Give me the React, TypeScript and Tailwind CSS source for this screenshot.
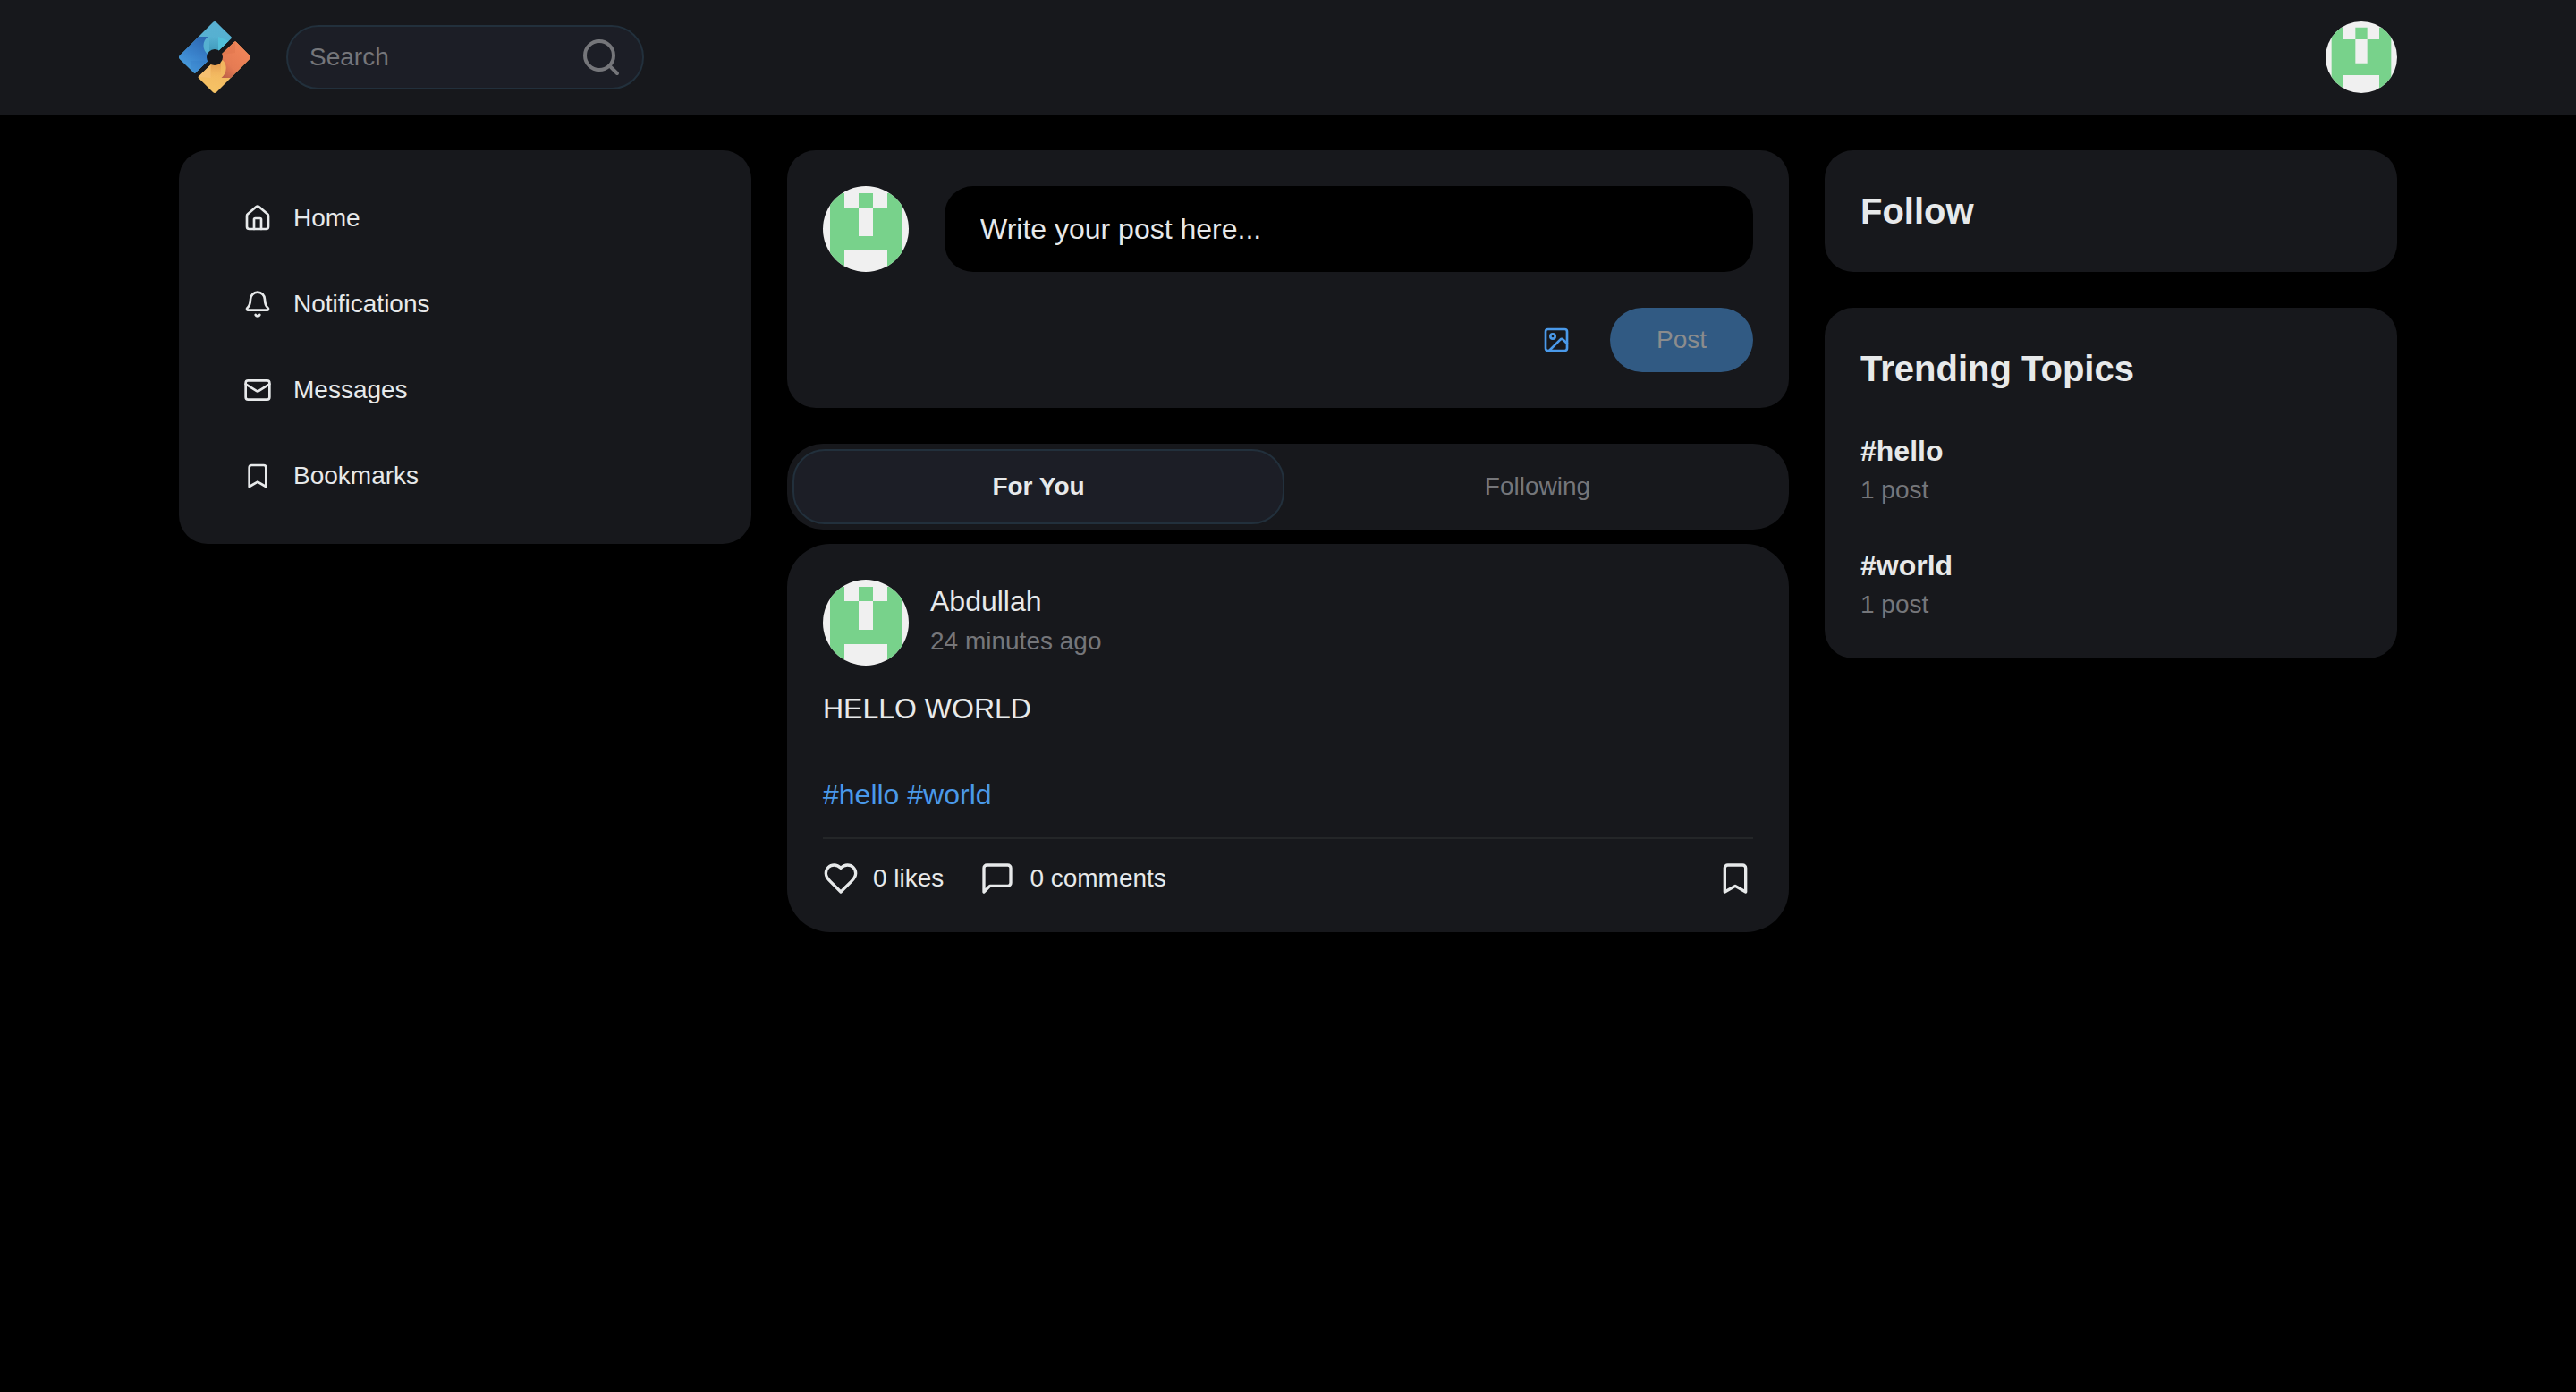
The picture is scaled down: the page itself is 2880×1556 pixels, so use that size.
import { useState } from "react";
import type { ReactNode } from "react";
import { Search } from "lucide-react";

const icons: Record<string, ReactNode> = {
  home: (
    <>
      <path d="M15 21v-8a1 1 0 0 0-1-1h-4a1 1 0 0 0-1 1v8" />
      <path d="M3 10a2 2 0 0 1 .709-1.528l7-5.999a2 2 0 0 1 2.582 0l7 5.999A2 2 0 0 1 21 10v9a2 2 0 0 1-2 2H5a2 2 0 0 1-2-2z" />
    </>
  ),
  bell: (
    <>
      <path d="M10.268 21a2 2 0 0 0 3.464 0" />
      <path d="M3.262 15.326A1 1 0 0 0 4 17h16a1 1 0 0 0 .74-1.673C19.41 13.956 18 12.499 18 8A6 6 0 0 0 6 8c0 4.499-1.411 5.956-2.738 7.326" />
    </>
  ),
  mail: (
    <>
      <rect width="20" height="16" x="2" y="4" rx="2" />
      <path d="m22 7-8.97 5.7a1.94 1.94 0 0 1-2.06 0L2 7" />
    </>
  ),
  bookmark: <path d="m19 21-7-4-7 4V5a2 2 0 0 1 2-2h10a2 2 0 0 1 2 2v16z" />,
  image: (
    <>
      <rect width="18" height="18" x="3" y="3" rx="2" ry="2" />
      <circle cx="9" cy="9" r="2" />
      <path d="m21 15-3.086-3.086a2 2 0 0 0-2.828 0L6 21" />
    </>
  ),
  heart: (
    <path d="M19 14c1.49-1.46 3-3.21 3-5.5A5.5 5.5 0 0 0 16.5 3c-1.76 0-3 .5-4.5 2-1.5-1.5-2.74-2-4.5-2A5.5 5.5 0 0 0 2 8.5c0 2.3 1.5 4.05 3 5.5l7 7Z" />
  ),
  comment: <path d="M21 15a2 2 0 0 1-2 2H7l-4 4V5a2 2 0 0 1 2-2h14a2 2 0 0 1 2 2z" />,
};

function Icon({ name, className }: { name: string; className: string }) {
  return (
    <svg
      viewBox="0 0 24 24"
      fill="none"
      stroke="currentColor"
      strokeWidth="2"
      strokeLinecap="round"
      strokeLinejoin="round"
      aria-hidden="true"
      className={className}
    >
      {icons[name]}
    </svg>
  );
}

function Logo() {
  return (
    <svg viewBox="0 0 80 80" className="size-20" role="img" aria-label="Logo">
      <defs>
        <linearGradient id="cyan" x1="0" y1="0" x2="0.3" y2="1">
          <stop offset="0" stopColor="#5bb0d2" />
          <stop offset="1" stopColor="#4db1cf" />
        </linearGradient>
        <linearGradient id="blue" x1="0.8" y1="0" x2="0.3" y2="1">
          <stop offset="0" stopColor="#2d68b2" />
          <stop offset="0.5" stopColor="#3a83cc" />
          <stop offset="1" stopColor="#4da3e2" />
        </linearGradient>
        <linearGradient id="orange" x1="0.7" y1="0.3" x2="0.15" y2="1">
          <stop offset="0" stopColor="#ee8358" />
          <stop offset="0.6" stopColor="#e57b53" />
          <stop offset="1" stopColor="#bf6249" />
        </linearGradient>
        <linearGradient id="amber" x1="0.6" y1="0" x2="0.4" y2="1">
          <stop offset="0" stopColor="#eba255" />
          <stop offset="1" stopColor="#f6c466" />
        </linearGradient>
        <linearGradient id="shadeDown" x1="0" y1="0" x2="0" y2="1">
          <stop offset="0" stopColor="#3d97b9" stopOpacity="0" />
          <stop offset="1" stopColor="#3d97b9" stopOpacity="0.9" />
        </linearGradient>
        <linearGradient id="shadeUp" x1="0" y1="0" x2="0" y2="1">
          <stop offset="0" stopColor="#dd9049" stopOpacity="0.8" />
          <stop offset="1" stopColor="#f0b15e" stopOpacity="0" />
        </linearGradient>
        <clipPath id="upper">
          <path d="M38 1Q40-1 42 1L58.4 17Q59.4 18 58.4 19.2L18.7 57.2Q17.7 58.2 16.7 57.2L1 42Q-1 40 1 38Z" />
        </clipPath>
        <clipPath id="lower">
          <path d="M62 22.8Q63 21.8 64 22.8L79 38Q81 40 79 42L42 79Q40 81 38 79L22 63.2Q21 62.2 22 61.2Z" />
        </clipPath>
        <mask id="hole">
          <rect width="80" height="80" fill="#fff" />
          <circle cx="40" cy="40" r="9" fill="#000" />
        </mask>
      </defs>
      <g mask="url(#hole)">
        <g clipPath="url(#upper)">
          <rect width="80" height="80" fill="url(#cyan)" />
          <path d="M34 17H44V34H34Z" fill="url(#shadeDown)" />
          <path d="M44 17L56 22L44 34Z" fill="#52bfd9" />
          <path d="M0 17H32.5C26.5 21 25 32 33 37V60H0Z" fill="url(#blue)" />
          <path d="M14 44H32V60H14Z" fill="#2f79c2" fillOpacity="0.25" />
        </g>
        <g clipPath="url(#lower)">
          <rect width="80" height="80" fill="url(#amber)" />
          <path d="M35.5 46H47V63H35.5Z" fill="url(#shadeUp)" />
          <path d="M22 62L35.5 48V63Z" fill="#f6c277" fillOpacity="0.7" />
          <path d="M47 42C55 46 54 58 47.5 63H80V20H47Z" fill="url(#orange)" />
          <path d="M47 37L63 35L63 22L47 34Z" fill="#d97048" fillOpacity="0.35" />
        </g>
      </g>
    </svg>
  );
}

function Avatar({ className }: { className: string }) {
  return (
    <svg viewBox="0 0 12 12" className={className} role="img" aria-label="Abdullah">
      <defs>
        <clipPath id="round">
          <circle cx="6" cy="6" r="6" />
        </clipPath>
      </defs>
      <g clipPath="url(#round)">
        <rect width="12" height="12" fill="#f0f0f0" />
        <path
          d="M1 1H3V3H5V1H7V3H9V1H11V12H9V9H3V12H1ZM5 3V7H7V3Z"
          fillRule="evenodd"
          fill="#78d28b"
        />
      </g>
    </svg>
  );
}

const links = [
  { label: "Home", icon: "home" },
  { label: "Notifications", icon: "bell" },
  { label: "Messages", icon: "mail" },
  { label: "Bookmarks", icon: "bookmark" },
];

const topics = [
  { tag: "#hello", count: "1 post" },
  { tag: "#world", count: "1 post" },
];

const tabs = ["For You", "Following"];

function Header() {
  return (
    <header className="bg-[#17181c]">
      <div className="mx-auto flex max-w-[2560px] items-center gap-10 px-10 py-6">
        <a href="#home">
          <Logo />
        </a>
        <form
          role="search"
          className="flex h-18 w-[400px] items-center rounded-full border-2 border-[#22303c] bg-[#1c1e26] pr-[22px] pl-6 text-[#75767a]"
        >
          <input
            type="search"
            aria-label="Search"
            placeholder="Search"
            className="min-w-0 flex-1 bg-transparent text-[28px] leading-[42px] text-[#e7e9ea] outline-none placeholder:text-[#75767a]"
          />
          <button type="submit" aria-label="Submit search">
            <Search className="size-12" />
          </button>
        </form>
        <button type="button" aria-label="Account" className="ml-auto">
          <Avatar className="size-20" />
        </button>
      </div>
    </header>
  );
}

function Sidebar() {
  return (
    <nav className="flex flex-col gap-6 rounded-4xl bg-[#17181c] p-10">
      {links.map((link) => (
        <a
          key={link.label}
          href={`#${link.label.toLowerCase()}`}
          className="flex h-18 items-center gap-6 px-8 text-[28px] leading-[42px]"
        >
          <Icon name={link.icon} className="size-8" />
          {link.label}
        </a>
      ))}
    </nav>
  );
}

function Composer() {
  return (
    <form className="flex flex-col gap-10 rounded-4xl bg-[#17181c] p-10">
      <div className="flex gap-10">
        <Avatar className="size-24" />
        <input
          type="text"
          aria-label="Write your post"
          placeholder="Write your post here..."
          className="h-24 min-w-0 flex-1 rounded-4xl bg-black px-10 text-[32px] leading-12 outline-none placeholder:text-[#e7e9ea]"
        />
      </div>
      <div className="flex justify-end gap-6">
        <button
          type="button"
          aria-label="Add image"
          className="flex size-18 items-center justify-center text-[#4a99e9]"
        >
          <Icon name="image" className="size-8" />
        </button>
        <button
          type="submit"
          disabled
          className="h-18 w-40 rounded-full bg-[#315a83] text-[28px] leading-10 text-[#8b8c8d]"
        >
          Post
        </button>
      </div>
    </form>
  );
}

function FeedTabs() {
  const [active, setActive] = useState(tabs[0]);
  return (
    <div role="tablist" className="flex h-24 gap-2 rounded-[40px] bg-[#17181c] p-1.5">
      {tabs.map((tab) => (
        <button
          key={tab}
          type="button"
          role="tab"
          aria-selected={tab === active}
          onClick={() => setActive(tab)}
          className={
            tab === active
              ? "flex-1 rounded-[36px] border-2 border-[#22303c] bg-[#1c1e26] text-[28px] leading-10 font-bold"
              : "flex-1 rounded-[36px] border-2 border-transparent text-[28px] leading-10 text-[#75767a]"
          }
        >
          {tab}
        </button>
      ))}
    </div>
  );
}

function Post() {
  return (
    <article className="flex flex-col gap-6 rounded-[48px] bg-[#17181c] p-10">
      <div className="flex gap-6">
        <Avatar className="size-24" />
        <div className="flex flex-col">
          <a href="#abdullah" className="text-[32px] leading-12">
            Abdullah
          </a>
          <a href="#post" className="text-[28px] leading-[42px] text-[#75767a]">
            24 minutes ago
          </a>
        </div>
      </div>
      <div className="text-[32px] leading-12 whitespace-pre-line">
        {"HELLO WORLD\n\n"}
        <a href="#hello" className="text-[#4a99e9]">
          #hello
        </a>{" "}
        <a href="#world" className="text-[#4a99e9]">
          #world
        </a>
      </div>
      <hr className="border-t-2 border-[#242628]" />
      <div className="flex items-center gap-10 text-[28px] leading-10">
        <button type="button" className="flex items-center gap-4">
          <Icon name="heart" className="size-10" />
          <span>0 likes</span>
        </button>
        <button type="button" className="flex items-center gap-4">
          <Icon name="comment" className="size-10" />
          <span>0 comments</span>
        </button>
        <button type="button" aria-label="Bookmark" className="ml-auto">
          <Icon name="bookmark" className="size-10" />
        </button>
      </div>
    </article>
  );
}

function Trends() {
  return (
    <aside className="flex flex-col gap-10">
      <section className="rounded-4xl bg-[#17181c] p-10">
        <h2 className="text-[40px] leading-14 font-bold">Follow</h2>
      </section>
      <section className="flex flex-col gap-10 rounded-4xl bg-[#17181c] p-10">
        <h2 className="text-[40px] leading-14 font-bold">Trending Topics</h2>
        {topics.map((topic) => (
          <a key={topic.tag} href={topic.tag} className="flex flex-col">
            <span className="text-[32px] leading-12 font-bold">{topic.tag}</span>
            <span className="text-[28px] leading-10 text-[#75767a]">{topic.count}</span>
          </a>
        ))}
      </section>
    </aside>
  );
}

export default function App() {
  return (
    <div className="min-h-screen bg-black font-['Helvetica_Neue','Liberation_Sans',sans-serif] text-[#e7e9ea]">
      <Header />
      <div className="mx-auto grid max-w-[2560px] grid-cols-[4fr_7fr_4fr] items-start gap-10 p-10">
        <Sidebar />
        <main className="flex flex-col gap-10">
          <Composer />
          <div className="flex flex-col gap-4">
            <FeedTabs />
            <Post />
          </div>
        </main>
        <Trends />
      </div>
    </div>
  );
}
